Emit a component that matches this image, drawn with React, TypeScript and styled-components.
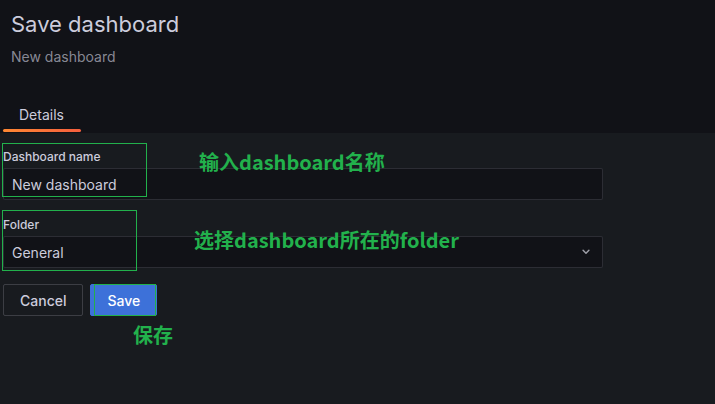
import React from "react";
import styled, { createGlobalStyle } from "styled-components";

const Global = createGlobalStyle`
  html, body { margin: 0; padding: 0; background: #181b1f; }
  body { font-family: Inter, "Noto Sans", sans-serif; color: #ccccdc; }
  * { box-sizing: border-box; }
`;

const Page = styled.div`
  position: relative;
  width: 715px;
  height: 404px;
  background: #181b1f;
  overflow: hidden;
`;

const Header = styled.header`
  background: #111217;
  height: 133px;
  display: flex;
  flex-direction: column;
  padding: 9px 0 0 0;
`;

const Title = styled.h2`
  margin: 0 0 0 11px;
  font-size: 22px;
  font-weight: 400;
  line-height: 30px;
  color: #ccccdc;
`;

const Subtitle = styled.div`
  margin: 8px 0 0 11px;
  font-size: 14px;
  line-height: 20px;
  color: rgba(204, 204, 220, 0.65);
`;

const Tabs = styled.div`
  margin-top: auto;
  display: flex;
  padding-left: 3px;
`;

const Tab = styled.div<{ $active?: boolean }>`
  position: relative;
  width: 78px;
  height: 40px;
  padding: 12px 0 0 16px;
  font-size: 14px;
  line-height: 20px;
  color: #ccccdc;
  &::after {
    content: "";
    display: ${(p) => (p.$active ? "block" : "none")};
    position: absolute;
    left: 0;
    right: 0;
    bottom: 1px;
    height: 3px;
    border-radius: 2px;
    background: linear-gradient(270deg, #f55f3e 0%, #ff8833 100%);
  }
`;

const Body = styled.div`
  padding: 15px 0 0 3px;
  width: 603px;
`;

const Field = styled.div`
  margin-bottom: 16px;
`;

const Label = styled.label`
  display: block;
  font-size: 12px;
  font-weight: 500;
  line-height: 18px;
  margin-bottom: 2px;
  color: #ccccdc;
`;

const InputBox = styled.div`
  height: 32px;
  display: flex;
  align-items: center;
  justify-content: space-between;
  padding: 0 11px 0 8px;
  background: #111217;
  border: 1px solid rgba(204, 204, 220, 0.15);
  border-radius: 2px;
  font-size: 14px;
  color: #ccccdc;
`;

const Chevron = styled.svg`
  width: 10px;
  height: 10px;
  color: #9fa0a9;
`;

const Buttons = styled.div`
  display: flex;
  gap: 7px;
`;

const Button = styled.button<{ $primary?: boolean }>`
  height: 32px;
  padding: 0 16px;
  font-family: Inter, sans-serif;
  font-size: 14px;
  font-weight: 500;
  border-radius: 2px;
  color: ${(p) => (p.$primary ? "#ffffff" : "#ccccdc")};
  background: ${(p) => (p.$primary ? "#3d71d9" : "transparent")};
  border: 1px solid ${(p) => (p.$primary ? "#3d71d9" : "rgba(204, 204, 220, 0.2)")};
`;

const MarkBox = styled.div`
  position: absolute;
  border: 1px solid #22b14c;
  pointer-events: none;
`;

const Note = styled.div`
  position: absolute;
  font-family: "Noto Sans CJK SC", "Noto Sans", sans-serif;
  font-weight: 700;
  font-size: 20px;
  line-height: 22px;
  color: #22b14c;
  white-space: nowrap;
`;

export default function App() {
  return (
    <Page>
      <Global />
      <Header>
        <Title>Save dashboard</Title>
        <Subtitle>New dashboard</Subtitle>
        <Tabs>
          <Tab $active>Details</Tab>
        </Tabs>
      </Header>
      <Body>
        <Field>
          <Label>Dashboard name</Label>
          <InputBox>New dashboard</InputBox>
        </Field>
        <Field>
          <Label>Folder</Label>
          <InputBox>
            <span>General</span>
            <Chevron viewBox="0 0 24 24" fill="none" stroke="currentColor" strokeWidth="3.5" strokeLinecap="round" strokeLinejoin="round">
              <path d="m5 8 7 7 7-7" />
            </Chevron>
          </InputBox>
        </Field>
        <Buttons>
          <Button>Cancel</Button>
          <Button $primary>Save</Button>
        </Buttons>
      </Body>

      <MarkBox style={{ left: 2, top: 143, width: 145, height: 54 }} />
      <MarkBox style={{ left: 2, top: 210, width: 135, height: 61 }} />
      <MarkBox style={{ left: 94, top: 284, width: 62, height: 32 }} />
      <Note style={{ left: 199, top: 151 }}>输入dashboard名称</Note>
      <Note style={{ left: 194, top: 229 }}>选择dashboard所在的folder</Note>
      <Note style={{ left: 133, top: 324 }}>保存</Note>
    </Page>
  );
}
